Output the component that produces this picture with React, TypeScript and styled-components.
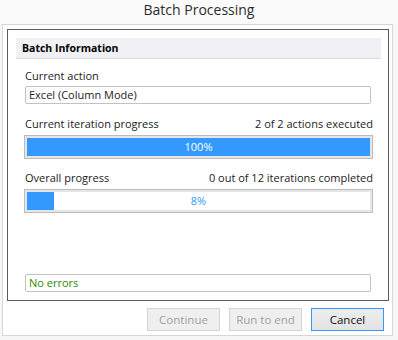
import * as React from 'react'
import styled, { createGlobalStyle } from 'styled-components'

const GlobalStyle = createGlobalStyle`
  html, body {
    margin: 0;
    padding: 0;
    background: #f7f7f7;
  }
  body {
    font-family: 'Open Sans', 'Noto Sans', sans-serif;
    font-size: 11px;
    color: #1b1b1b;
  }
`

const Window = styled.div`
  width: 398px;
  height: 340px;
  display: flex;
  flex-direction: column;
  box-sizing: border-box;
`

const Title = styled.div`
  height: 24px;
  line-height: 20px;
  text-align: center;
  font-size: 14px;
  color: #2b2b2b;
  background: #fbfbfb;
`

const Panel = styled.div`
  flex: 1;
  margin: 0 5px 4px 2px;
  border: 1px solid #d6d6d6;
  background: #fff;
  padding: 4px 3px 4px 4px;
  display: flex;
  flex-direction: column;
`

const Group = styled.div`
  flex: 1;
  border: 1px solid #5c5c5c;
  padding: 8px 7px 8px 8px;
  display: flex;
  flex-direction: column;
`

const GroupHeader = styled.div`
  height: 20px;
  line-height: 20px;
  background: #f0f0f5;
  border-bottom: 1px solid #dcdce2;
  padding-left: 6px;
  font-size: 10.5px;
  font-weight: 700;
  color: #000;
`

const Section = styled.div`
  flex: 1;
  padding: 0 8px;
  display: flex;
  flex-direction: column;
`

const LabelRow = styled.div<{ $top: number }>`
  margin-top: ${p => p.$top}px;
  height: 16px;
  line-height: 16px;
  display: flex;
  justify-content: space-between;
  padding: 0 0 0 1px;
`

const Field = styled.div<{ $color?: string; $top?: number }>`
  margin: ${p => p.$top ?? 2}px 2px 0 1px;
  height: 16px;
  line-height: 16px;
  border: 1px solid #c2c2c2;
  border-radius: 2px;
  padding-left: 3px;
  color: ${p => p.$color || '#1b1b1b'};
`

const Bar = styled.div`
  margin-top: 3px;
  height: 18px;
  border: 1px solid #bcbcbc;
  box-shadow: inset 0 0 0 2px #e6e6e6;
  padding: 2px;
`

const Track = styled.div`
  height: 18px;
  background: #fff;
  position: relative;
`

const Fill = styled.div`
  height: 100%;
  background: #3399ff;
`

const BarText = styled.div<{ $light: boolean }>`
  position: absolute;
  inset: 0;
  line-height: 18px;
  text-align: center;
  color: ${p => (p.$light ? '#ffffff' : '#3399ff')};
`

const Spacer = styled.div`
  flex: 1;
`

const Buttons = styled.div`
  margin-top: 7px;
  display: flex;
  justify-content: flex-end;
  gap: 9px;
  padding-right: 5px;
`

const Button = styled.button<{ $primary?: boolean }>`
  width: 73px;
  height: 23px;
  font-family: inherit;
  font-size: 11.5px;
  padding: 0;
  border-radius: 0;
  border: 1px solid ${p => (p.$primary ? '#3399ff' : '#d4d4d4')};
  background: ${p => (p.$primary ? 'linear-gradient(#ededed, #e3e3e3)' : '#efefef')};
  color: ${p => (p.$primary ? '#111' : '#a0a0a0')};
`

const Progress = ({ value }: { value: number }) => (
  <Bar>
    <Track>
      <Fill style={{ width: `${value}%` }} />
      <BarText $light={value > 55}>{value}%</BarText>
    </Track>
  </Bar>
)

export default function App() {
  return (
    <Window>
      <GlobalStyle />
      <Title>Batch Processing</Title>
      <Panel>
        <Group>
          <GroupHeader>Batch Information</GroupHeader>
          <Section>
            <LabelRow $top={9}>
              <span>Current action</span>
            </LabelRow>
            <Field>Excel (Column Mode)</Field>
            <LabelRow $top={12}>
              <span>Current iteration progress</span>
              <span>2 of 2 actions executed</span>
            </LabelRow>
            <Progress value={100} />
            <LabelRow $top={11}>
              <span>Overall progress</span>
              <span>0 out of 12 iterations completed</span>
            </LabelRow>
            <Progress value={8} />
            <Spacer />
            <Field $color="#2e8b00" $top={0}>No errors</Field>
          </Section>
        </Group>
        <Buttons>
          <Button disabled>Continue</Button>
          <Button disabled>Run to end</Button>
          <Button $primary>Cancel</Button>
        </Buttons>
      </Panel>
    </Window>
  )
}
